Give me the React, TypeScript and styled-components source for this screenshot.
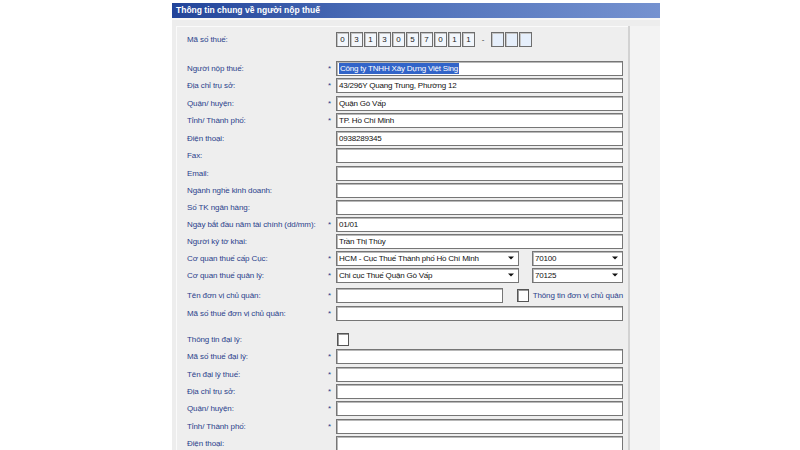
import React from 'react';
import styled, { createGlobalStyle } from 'styled-components';

const GlobalStyle = createGlobalStyle`
  html, body {
    margin: 0;
    padding: 0;
    background: #ffffff;
    font-family: "Liberation Sans", Arial, sans-serif;
  }
`;

const Frame = styled.div`
  margin-left: 172px;
  width: 488px;
  height: 450px;
  padding-top: 3px;
  box-sizing: border-box;
  display: flex;
  flex-direction: column;
  overflow: hidden;
`;

const Header = styled.div`
  height: 15px;
  line-height: 15px;
  padding-left: 4px;
  background: linear-gradient(to right, #22449a 0%, #4a6cb6 40%, #7592d0 100%);
  color: #ffffff;
  font-size: 8.5px;
  font-weight: bold;
  border-bottom: 2px solid #f6f6f6;
`;

const Content = styled.div`
  flex: 1;
  display: flex;
  background: #ededed;
  padding-top: 6px;
`;

const Panel = styled.div`
  margin-left: 4px;
  width: 452px;
  box-sizing: border-box;
  border-top: 1px solid #fafafa;
  border-left: 1px solid #fafafa;
  padding: 5px 5px 0 10px;
  background: #eeeeee;
`;

const Side = styled.div`
  flex: 1;
  border-left: 2px solid #d2d2d2;
  background: #f3f3f3;
`;

const Row = styled.div<{ $gap: number }>`
  display: grid;
  grid-template-columns: 139px 10px 287px;
  align-items: center;
  height: 15px;
  margin-top: ${(p) => p.$gap}px;
`;

const Label = styled.span`
  color: #2b3f8c;
  font-size: 8px;
  letter-spacing: -0.1px;
  white-space: nowrap;
`;

const Star = styled.span`
  color: #2b3f8c;
  font-size: 8px;
  padding-left: 2px;
`;

const TextBox = styled.div<{ $width?: number }>`
  height: 15px;
  width: ${(p) => (p.$width ? `${p.$width}px` : '100%')};
  box-sizing: border-box;
  border: 1px solid #767676;
  box-shadow: inset 1px 1px 0 #b8b8b8;
  background: #ffffff;
  padding-left: 2px;
  display: flex;
  align-items: center;
  font-size: 8px;
  letter-spacing: -0.2px;
  color: #111111;
  white-space: nowrap;
  overflow: hidden;
`;

const Selected = styled.span`
  background: #3264c8;
  color: #ffffff;
  padding: 1px 1px;
`;

const Pair = styled.div`
  display: flex;
  align-items: center;
  gap: 13px;
`;

const Combo = styled(TextBox)`
  justify-content: space-between;
  padding-right: 4px;
`;

const Digits = styled.div`
  display: flex;
  align-items: center;
  gap: 1px;
`;

const DigitBox = styled.div<{ $tint: string }>`
  width: 13px;
  height: 15px;
  box-sizing: border-box;
  border: 1px solid #6e6e6e;
  box-shadow: inset 1px 1px 0 #c4c4c4;
  background: ${(p) => p.$tint};
  display: flex;
  align-items: center;
  justify-content: center;
  font-size: 8px;
  color: #222;
`;

const Dash = styled.span`
  width: 14px;
  text-align: center;
  font-size: 8px;
  color: #333;
`;

const Check = styled.div`
  width: 12px;
  height: 13px;
  box-sizing: border-box;
  border: 1px solid #555555;
  box-shadow: inset 1px 1px 0 #9a9a9a;
  background: #ffffff;
  flex-shrink: 0;
`;

const CheckLine = styled.div`
  display: flex;
  align-items: center;
  gap: 4px;
  margin-left: 1px;
`;

const CheckText = styled.span`
  color: #2b3f8c;
  font-size: 8px;
  letter-spacing: -0.1px;
  white-space: nowrap;
`;

function Arrow(): JSX.Element {
  return (
    <svg width="6" height="4" viewBox="0 0 6 4">
      <path d="M0 0.5 H6 L3 3.5 Z" fill="#111" />
    </svg>
  );
}

type Field = {
  label: string;
  star?: boolean;
  value?: string;
  selected?: boolean;
  gap: number;
};

const topFields: Field[] = [
  { label: 'Người nộp thuế:', star: true, value: 'Công ty TNHH Xây Dựng Việt Sing', selected: true, gap: 13.5 },
  { label: 'Địa chỉ trụ sở:', star: true, value: '43/296Y Quang Trung, Phường 12', gap: 2.5 },
  { label: 'Quận/ huyện:', star: true, value: 'Quận Gò Vấp', gap: 2.5 },
  { label: 'Tỉnh/ Thành phố:', star: true, value: 'TP. Hồ Chí Minh', gap: 2.5 },
  { label: 'Điện thoại:', value: '0938289345', gap: 2.5 },
  { label: 'Fax:', gap: 2.5 },
  { label: 'Email:', gap: 2.5 },
  { label: 'Ngành nghề kinh doanh:', gap: 2 },
  { label: 'Số TK ngân hàng:', gap: 2 },
  { label: 'Ngày bắt đầu năm tài chính (dd/mm):', star: true, value: '01/01', gap: 2 },
  { label: 'Người ký tờ khai:', value: 'Trần Thị Thùy', gap: 2 },
];

const agentFields: Field[] = [
  { label: 'Mã số thuế đại lý:', star: true, gap: 2.5 },
  { label: 'Tên đại lý thuế:', star: true, gap: 2.5 },
  { label: 'Địa chỉ trụ sở:', star: true, gap: 2 },
  { label: 'Quận/ huyện:', star: true, gap: 2.5 },
  { label: 'Tỉnh/ Thành phố:', star: true, gap: 2.5 },
  { label: 'Điện thoại:', gap: 2 },
];

function FieldRow({ field }: { field: Field }): JSX.Element {
  return (
    <Row $gap={field.gap}>
      <Label>{field.label}</Label>
      <Star>{field.star ? '*' : ''}</Star>
      <TextBox>
        {field.selected ? <Selected>{field.value}</Selected> : field.value}
      </TextBox>
    </Row>
  );
}

function ComboRow({
  label,
  main,
  code,
  gap,
}: {
  label: string;
  main: string;
  code: string;
  gap: number;
}): JSX.Element {
  return (
    <Row $gap={gap}>
      <Label>{label}</Label>
      <Star>*</Star>
      <Pair>
        <Combo $width={183}>
          <span>{main}</span>
          <Arrow />
        </Combo>
        <Combo $width={91}>
          <span>{code}</span>
          <Arrow />
        </Combo>
      </Pair>
    </Row>
  );
}

const mst = ['0', '3', '1', '3', '0', '5', '7', '0', '1', '1'];

export default function App(): JSX.Element {
  return (
    <>
      <GlobalStyle />
      <Frame>
        <Header>Thông tin chung về người nộp thuế</Header>
        <Content>
          <Panel>
            <Row $gap={0}>
              <Label>Mã số thuế:</Label>
              <Star />
              <Digits>
                {mst.map((d, i) => (
                  <DigitBox key={i} $tint="#f2f6fb">
                    {d}
                  </DigitBox>
                ))}
                <Dash>-</Dash>
                {[0, 1, 2].map((i) => (
                  <DigitBox key={`s${i}`} $tint="#e6effb" />
                ))}
              </Digits>
            </Row>
            {topFields.map((f, i) => (
              <FieldRow key={`t${i}`} field={f} />
            ))}
            <ComboRow
              label="Cơ quan thuế cấp Cục:"
              main="HCM - Cục Thuế Thành phố Hồ Chí Minh"
              code="70100"
              gap={2}
            />
            <ComboRow
              label="Cơ quan thuế quản lý:"
              main="Chi cục Thuế Quận Gò Vấp"
              code="70125"
              gap={2}
            />
            <Row $gap={5}>
              <Label>Tên đơn vị chủ quản:</Label>
              <Star>*</Star>
              <Pair>
                <TextBox $width={169} />
                <CheckLine>
                  <Check />
                  <CheckText>Thông tin đơn vị chủ quản</CheckText>
                </CheckLine>
              </Pair>
            </Row>
            <FieldRow field={{ label: 'Mã số thuế đơn vị chủ quản:', star: true, gap: 3 }} />
            <Row $gap={11}>
              <Label>Thông tin đại lý:</Label>
              <Star />
              <CheckLine>
                <Check />
              </CheckLine>
            </Row>
            {agentFields.map((f, i) => (
              <FieldRow key={`a${i}`} field={f} />
            ))}
          </Panel>
          <Side />
        </Content>
      </Frame>
    </>
  );
}
